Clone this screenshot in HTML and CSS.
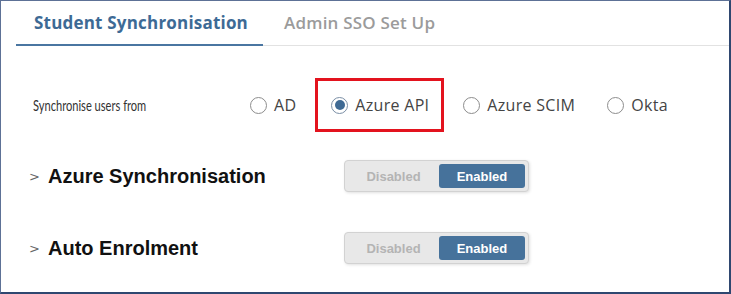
FILE: index.html
```html
<!DOCTYPE html>
<html>
<head>
<meta charset="utf-8">
<link rel="stylesheet" href="styles.css">
</head>
<body>
<div class="frame">
  <div class="tabs">
    <div class="tab active">Student Synchronisation</div>
    <div class="tab">Admin SSO Set Up</div>
  </div>
  <div class="sync-row">
    <div class="sync-label-box"><span class="sync-label">Synchronise users from</span></div>
    <div class="options">
      <label class="opt opt-ad"><span class="radio"></span>AD</label>
      <label class="opt opt-api highlight"><span class="radio checked"></span>Azure API</label>
      <label class="opt opt-scim"><span class="radio"></span>Azure SCIM</label>
      <label class="opt opt-okta"><span class="radio"></span>Okta</label>
    </div>
  </div>
  <div class="setting">
    <div class="setting-title"><span class="chev">&gt;</span>Azure Synchronisation</div>
    <div class="toggle"><span class="seg">Disabled</span><span class="seg on">Enabled</span></div>
  </div>
  <div class="setting">
    <div class="setting-title"><span class="chev">&gt;</span>Auto Enrolment</div>
    <div class="toggle"><span class="seg">Disabled</span><span class="seg on">Enabled</span></div>
  </div>
</div>
</body>
</html>
```
FILE: styles.css
```css
html, body { margin: 0; padding: 0; background: #fff; }
.frame {
  box-sizing: border-box;
  width: 731px;
  height: 294px;
  border-left: 1px solid #5d7196;
  border-top: 1px solid #5d7196;
  border-right: 2px solid #2f4770;
  border-bottom: 2px solid #2f4770;
  font-family: "Open Sans", sans-serif;
  overflow: hidden;
}
.tabs {
  display: flex;
  margin-top: 8px;
  margin-left: 15px;
  border-bottom: 1px solid #e2e2e2;
  height: 36px;
}
.tab {
  font-family: "Open Sans", sans-serif;
  font-size: 17px;
  letter-spacing: 0.2px;
  font-weight: 600;
  color: #9b9b9b;
  padding: 0 0 0 21px;
  line-height: 28px;
  box-sizing: border-box;
}
.tab.active {
  color: #3d6a95;
  font-weight: 700;
  border-bottom: 2px solid #4a76a1;
  margin-bottom: -1px;
  width: 247px;
  padding-left: 18px;
}
.sync-row {
  display: flex;
  align-items: center;
  margin-top: 32px;
  height: 54px;
  padding-left: 32px;
}
.sync-label-box {
  width: 217px;
  flex: 0 0 217px;
}
.sync-label {
  display: inline-block;
  font-family: "Lato", sans-serif;
  font-size: 15px;
  color: #333;
  white-space: nowrap;
  transform: scaleX(0.74);
  transform-origin: left center;
}
.options { display: flex; align-items: center; }
.opt {
  display: flex;
  align-items: center;
  font-family: "Open Sans", sans-serif;
  font-size: 16px;
  letter-spacing: 0.3px;
  color: #444;
}
.radio {
  width: 17px; height: 17px;
  border: 1px solid #8d8d8d;
  border-radius: 50%;
  box-sizing: border-box;
  margin-right: 7px;
  display: inline-flex;
  align-items: center;
  justify-content: center;
}
.radio.checked { border-color: #7a8ea5; }
.radio.checked::after {
  content: "";
  width: 10px; height: 10px;
  border-radius: 50%;
  background: #3f6a94;
}
.highlight {
  border: 3px solid #e3131e;
  height: 54px;
  box-sizing: border-box;
  padding: 0 12px 0 13px;
  margin-left: 19px;
}
.opt-scim { margin-left: 19px; }
.opt-okta { margin-left: 32px; }
.setting {
  display: flex;
  align-items: center;
  padding-left: 28px;
  height: 34px;
}
.setting + .setting { margin-top: 38px; }
.sync-row + .setting { margin-top: 27px; }
.setting-title {
  font-family: "Liberation Sans", Arial, sans-serif;
  font-weight: 700;
  font-size: 20px;
  color: #111;
  width: 315px;
  display: flex;
  align-items: center;
}
.chev {
  font-family: "DejaVu Sans", sans-serif;
  font-weight: 400;
  font-size: 13px;
  color: #666;
  width: 19px;
}
.toggle {
  display: flex;
  width: 185px;
  height: 32px;
  box-sizing: border-box;
  border: 1px solid #d2d2d2;
  background: #e8e8e8;
  border-radius: 4px;
  padding: 3px;
  box-shadow: 1px 1px 3px rgba(0,0,0,0.12);
}
.seg {
  flex: 1;
  display: flex;
  align-items: center;
  justify-content: center;
  font-family: "Liberation Sans", Arial, sans-serif;
  font-weight: 700;
  font-size: 13px;
  color: #b4b4b4;
  border-radius: 3px;
}
.seg.on {
  flex: 0 0 86px;
  background: #46729b;
  color: #fff;
}
```
